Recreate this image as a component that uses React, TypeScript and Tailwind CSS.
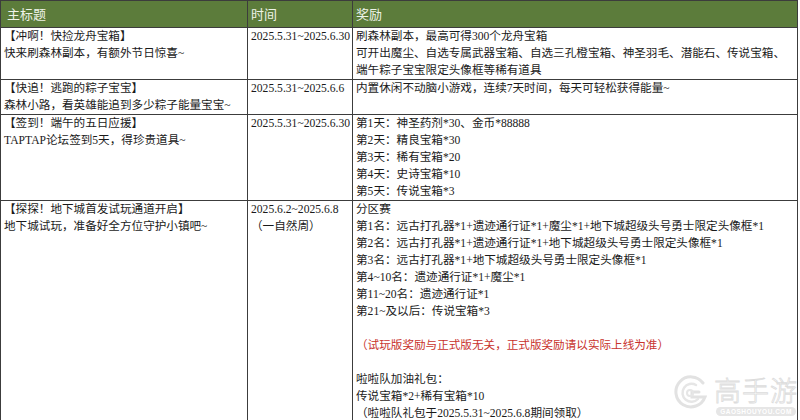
const FONT = '"Liberation Serif", "Noto Sans CJK SC", serif';

type Row = {
  title: string[];
  time: string[];
  reward: { text: string; red?: boolean }[];
};

const ROWS: Row[] = [
  {
    title: ["【冲啊！快捡龙舟宝箱】", "快来刷森林副本，有额外节日惊喜~"],
    time: ["2025.5.31~2025.6.30"],
    reward: [
      { text: "刷森林副本，最高可得300个龙舟宝箱" },
      { text: "可开出魔尘、自选专属武器宝箱、自选三孔橙宝箱、神圣羽毛、潜能石、传说宝箱、" },
      { text: "端午粽子宝宝限定头像框等稀有道具" },
    ],
  },
  {
    title: ["【快追！逃跑的粽子宝宝】", "森林小路，看英雄能追到多少粽子能量宝宝~"],
    time: ["2025.5.31~2025.6.6"],
    reward: [{ text: "内置休闲不动脑小游戏，连续7天时间，每天可轻松获得能量~" }],
  },
  {
    title: ["【签到！端午的五日应援】", "TAPTAP论坛签到5天，得珍贵道具~"],
    time: ["2025.5.31~2025.6.30"],
    reward: [
      { text: "第1天：神圣药剂*30、金币*88888" },
      { text: "第2天：精良宝箱*30" },
      { text: "第3天：稀有宝箱*20" },
      { text: "第4天：史诗宝箱*10" },
      { text: "第5天：传说宝箱*3" },
    ],
  },
  {
    title: ["【探探！地下城首发试玩通道开启】", "地下城试玩，准备好全方位守护小镇吧~"],
    time: ["2025.6.2~2025.6.8", "（一自然周）"],
    reward: [
      { text: "分区赛" },
      { text: "第1名：远古打孔器*1+遗迹通行证*1+魔尘*1+地下城超级头号勇士限定头像框*1" },
      { text: "第2名：远古打孔器*1+遗迹通行证*1+地下城超级头号勇士限定头像框*1" },
      { text: "第3名：远古打孔器*1+地下城超级头号勇士限定头像框*1" },
      { text: "第4~10名：遗迹通行证*1+魔尘*1" },
      { text: "第11~20名：遗迹通行证*1" },
      { text: "第21~及以后：传说宝箱*3" },
      { text: "" },
      { text: "（试玩版奖励与正式版无关，正式版奖励请以实际上线为准）", red: true },
      { text: "" },
      { text: "啦啦队加油礼包：" },
      { text: "传说宝箱*2+稀有宝箱*10" },
      { text: "（啦啦队礼包于2025.5.31~2025.6.8期间领取）" },
    ],
  },
];

function Lines({ items }: { items: { text: string; red?: boolean }[] }) {
  return (
    <>
      {items.map((l, i) => (
        <div
          key={i}
          className={`h-[17px] whitespace-nowrap ${l.red ? "text-[#c8322c]" : ""}`}
        >
          {l.text}
        </div>
      ))}
    </>
  );
}

function Watermark() {
  return (
    <div className="pointer-events-none absolute left-[672px] top-[375px] flex items-start gap-[4px]">
      <svg width="38" height="36" viewBox="0 0 38 36">
        <path
          d="M31 8 A15 15 0 1 0 33 22 L20 22 L20 17 L27 17"
          fill="none"
          stroke="#e2e2e2"
          strokeWidth="3"
          strokeLinecap="round"
        />
        <path
          d="M24 10 A9 9 0 1 0 26 24"
          fill="none"
          stroke="#e6e6e6"
          strokeWidth="2.5"
          strokeLinecap="round"
        />
        <circle cx="18" cy="18" r="3" fill="none" stroke="#e6e6e6" strokeWidth="2" />
      </svg>
      <div className="flex flex-col items-center">
        <div
          className="text-[27px] font-light leading-[30px] tracking-[1px] text-white [-webkit-text-stroke:0.8px_#dcdcdc]"
          style={{ fontFamily: '"Noto Sans CJK SC", sans-serif' }}
        >
          高手游
        </div>
        <div
          className="mt-[2px] rounded-full bg-[#e6e6e6] px-[4px] text-[6.5px] font-bold leading-[9px] tracking-[0.5px] text-white"
          style={{ fontFamily: '"Liberation Sans", sans-serif' }}
        >
          GAOSHOUYOU.COM
        </div>
      </div>
    </div>
  );
}

export default function App() {
  return (
    <div
      className="relative h-[420px] w-[800px] overflow-hidden bg-white text-[11.6px] leading-[17px] text-[#1a1a1a]"
      style={{ fontFamily: FONT }}
    >
      <table className="w-[797px] table-fixed border-collapse">
        <colgroup>
          <col className="w-[247px]" />
          <col className="w-[105px]" />
          <col className="w-[445px]" />
        </colgroup>
        <thead>
          <tr className="h-[27px] bg-[#5c7c3b] text-left text-[13px] text-[#eef3e8]">
            <th className="border border-[#3c3c3c] px-[6px] align-middle font-normal">主标题</th>
            <th className="border border-[#3c3c3c] px-[3px] align-middle font-normal">时间</th>
            <th className="border border-[#3c3c3c] px-[3px] align-middle font-normal">奖励</th>
          </tr>
        </thead>
        <tbody>
          {ROWS.map((row, i) => (
            <tr key={i}>
              <td className="border border-[#3c3c3c] px-[3px] pt-0 align-top">
                {row.title.map((t, j) => (
                  <div key={j} className="h-[17px] whitespace-nowrap">
                    {t}
                  </div>
                ))}
              </td>
              <td className="border border-[#3c3c3c] px-[3px] pt-0 align-top">
                {row.time.map((t, j) => (
                  <div key={j} className="h-[17px] whitespace-nowrap">
                    {t}
                  </div>
                ))}
              </td>
              <td className="border border-[#3c3c3c] px-[3px] pt-0 align-top">
                <Lines items={row.reward} />
              </td>
            </tr>
          ))}
        </tbody>
      </table>
      <Watermark />
    </div>
  );
}
